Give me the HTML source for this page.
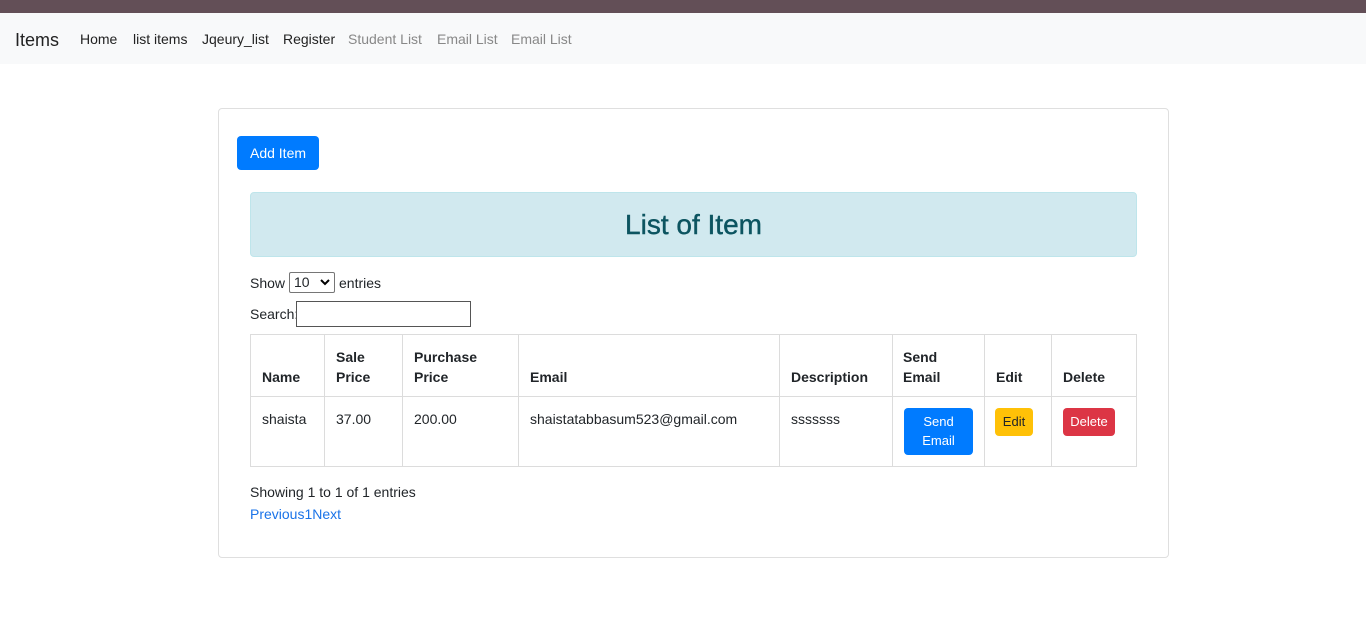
<!DOCTYPE html>
<html><head><meta charset="utf-8"><style>
*{box-sizing:border-box;margin:0;padding:0}
body{width:1366px;height:621px;position:relative;background:#fff;font-family:"Liberation Sans",sans-serif;font-size:14px;color:#212529;overflow:hidden}
.a{position:absolute;white-space:nowrap}
.top{left:0;top:0;width:1366px;height:13px;background:#634f57}
.nav{left:0;top:13px;width:1366px;height:51px;background:#f8f9fa}
.card{left:218px;top:108px;width:951px;height:450px;border:1px solid #dfdfdf;border-radius:4px}
.btn{border-radius:4px;color:#fff;text-align:center;font-size:13px}
.v{position:absolute;top:334px;height:133px;width:1px;background:#dcdcdc}
.h{position:absolute;left:250px;width:887px;height:1px;background:#dcdcdc}
.b{font-weight:bold}
</style></head><body>
<div class="a top"></div>
<div class="a nav"></div>
<div class="a" style="left:15px;top:30px;font-size:18px;color:#222">Items</div>
<div class="a" style="left:80px;top:31px;color:#222">Home</div>
<div class="a" style="left:133px;top:31px;color:#222">list items</div>
<div class="a" style="left:202px;top:31px;color:#222">Jqeury_list</div>
<div class="a" style="left:283px;top:31px;color:#222">Register</div>
<div class="a" style="left:348px;top:31px;color:#888">Student List</div>
<div class="a" style="left:437px;top:31px;color:#888">Email List</div>
<div class="a" style="left:511px;top:31px;color:#888">Email List</div>
<div class="a card"></div>
<div class="a btn" style="left:237px;top:136px;width:82px;height:34px;background:#007bff;line-height:34px;font-size:14px">Add Item</div>
<div class="a" style="left:250px;top:192px;width:887px;height:65px;background:#d1e9ef;border:1px solid #bee5eb;border-radius:4px;color:#0c5460;font-size:28px;text-align:center;line-height:63px;-webkit-text-stroke:0.4px #0c5460">List of Item</div>
<div class="a" style="left:250px;top:275px">Show</div>
<div class="a" style="left:289px;top:272px;width:46px;height:21px;border:1px solid #767676;border-radius:2px;padding-left:4px;line-height:19px">10</div>
<svg class="a" style="left:320px;top:279px" width="10" height="7" viewBox="0 0 10 7"><path d="M1 1L5 5L9 1" stroke="#000" stroke-width="2" fill="none"/></svg>
<div class="a" style="left:339px;top:275px">entries</div>
<div class="a" style="left:250px;top:306px">Search:</div>
<div class="a" style="left:296px;top:301px;width:175px;height:26px;border:1px solid #555"></div>
<div class="h" style="top:334px"></div><div class="h" style="top:396px"></div><div class="h" style="top:466px"></div>
<div class="v" style="left:250px"></div><div class="v" style="left:324px"></div><div class="v" style="left:402px"></div><div class="v" style="left:518px"></div><div class="v" style="left:779px"></div><div class="v" style="left:892px"></div><div class="v" style="left:984px"></div><div class="v" style="left:1051px"></div><div class="v" style="left:1136px"></div>
<div class="a b" style="left:262px;top:369px">Name</div>
<div class="a b" style="left:336px;top:347px;line-height:20px">Sale<br>Price</div>
<div class="a b" style="left:414px;top:347px;line-height:20px">Purchase<br>Price</div>
<div class="a b" style="left:530px;top:369px">Email</div>
<div class="a b" style="left:791px;top:369px">Description</div>
<div class="a b" style="left:903px;top:347px;line-height:20px">Send<br>Email</div>
<div class="a b" style="left:996px;top:369px">Edit</div>
<div class="a b" style="left:1063px;top:369px">Delete</div>
<div class="a" style="left:262px;top:411px">shaista</div>
<div class="a" style="left:336px;top:411px">37.00</div>
<div class="a" style="left:414px;top:411px">200.00</div>
<div class="a" style="left:530px;top:411px">shaistatabbasum523@gmail.com</div>
<div class="a" style="left:791px;top:411px">sssssss</div>
<div class="a btn" style="left:904px;top:408px;width:69px;height:47px;background:#007bff;line-height:19px;padding-top:4px">Send<br>Email</div>
<div class="a btn" style="left:995px;top:408px;width:38px;height:28px;background:#ffc107;color:#212529;line-height:28px">Edit</div>
<div class="a btn" style="left:1063px;top:408px;width:52px;height:28px;background:#dc3545;line-height:28px">Delete</div>
<div class="a" style="left:250px;top:484px">Showing 1 to 1 of 1 entries</div>
<div class="a" style="left:250px;top:506px;color:#1a73e8">Previous1Next</div>
</body></html>
